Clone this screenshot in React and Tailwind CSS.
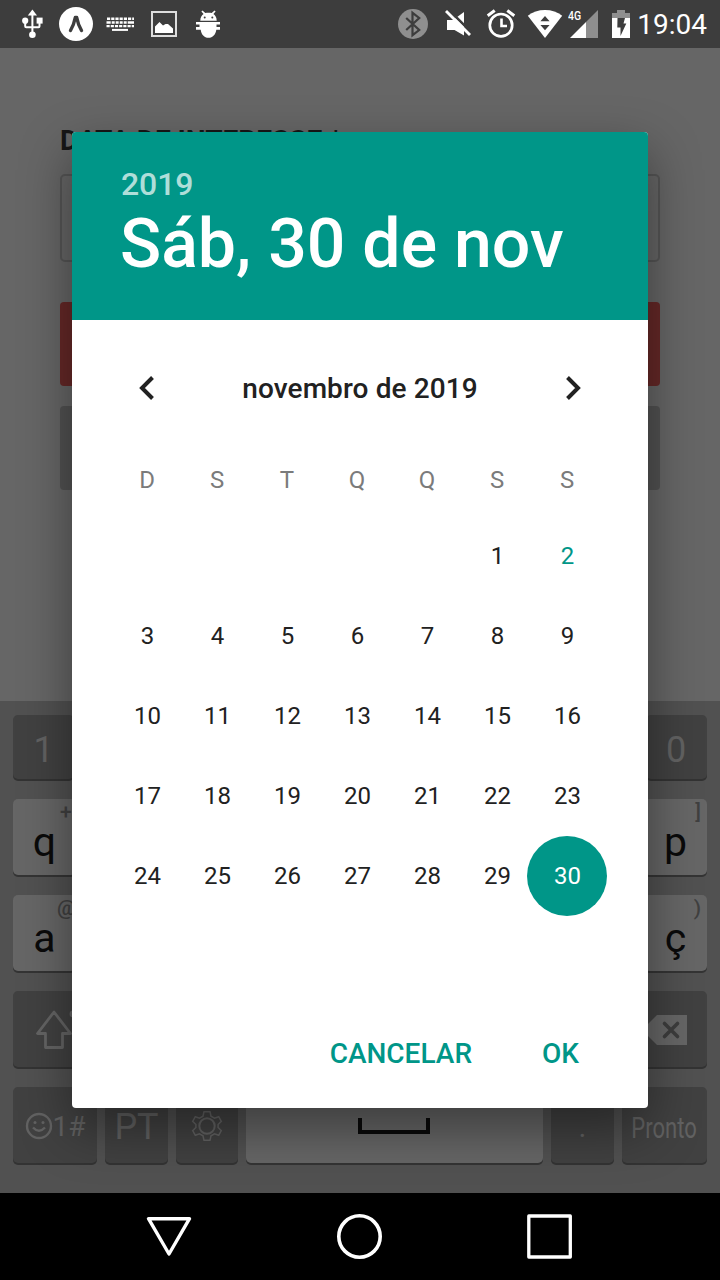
import React from "react";

const DARK = "#3d3d3d";

function StatusBar() {
  return (
    <header className="flex h-12 w-[720px] shrink-0 items-center bg-[#3d3d3d] text-white">
      <svg className="ml-5 h-12 w-6 shrink-0" viewBox="20 0 24 48" fill="#fff">
        <path d="M32.4 9.5l4.6 6h-9.2z" />
        <path d="M32.4 13v20M25.2 20v6.2q0 1 1 1h12.3q1 0 1-1V20" fill="none" stroke="#fff" strokeWidth="2" />
        <circle cx="25.2" cy="20.7" r="3.1" />
        <rect x="36.6" y="17.6" width="6" height="6" />
        <circle cx="32.4" cy="34.8" r="3.3" />
      </svg>
      <svg className="ml-3.5 h-12 w-9 shrink-0" viewBox="58 0 36 48">
        <circle cx="76" cy="24" r="17" fill="#fff" />
        <path d="M70.500 30.500Q74 24.500 75.300 17.500h1.400Q78 24.500 81.500 30.500" fill="none" stroke={DARK} strokeWidth="3.400" strokeLinecap="round" strokeLinejoin="round" />
      </svg>
      <svg className="ml-[11px] h-12 w-[30px] shrink-0" viewBox="105 0 30 48" fill="none" stroke="#fff">
        <path d="M107 18.700h27" strokeWidth="2.500" strokeDasharray="3.200 1" />
        <path d="M106.500 22.500h27.500" strokeWidth="2.300" strokeDasharray="4.200 1 3 1 3 1 3 1 3 1 8" />
        <path d="M106.500 26.200h27.500" strokeWidth="2.300" strokeDasharray="3.200 1" />
        <path d="M112 29.900h16" strokeWidth="2" />
      </svg>
      <svg className="ml-[15px] h-12 w-7 shrink-0" viewBox="150 0 28 48">
        <rect x="152" y="12" width="24" height="24" fill="none" stroke="#ddd" strokeWidth="2" />
        <path d="M155 33v-6.500l4.500-4.500 3.500 3.500 2.500-1.500h2.500l5 4.500V33z" fill="#fff" />
      </svg>
      <svg className="ml-4 h-12 w-[28px] shrink-0" viewBox="194 0 28 48" fill="#fff">
        <path d="M200.300 20.800c0-3.700 1.600-5.500 3.300-6.700l-2.200-2.600 1.100-1.100 2.800 2.700c2-.6 4.400-.6 6.400 0l2.800-2.700 1.100 1.100-2.200 2.600c1.700 1.200 3.300 3 3.300 6.700z" />
        <circle cx="204.700" cy="17.500" r="1" fill={DARK} />
        <circle cx="212.300" cy="17.500" r="1" fill={DARK} />
        <path d="M196 22h24v2.600h-3.500V27h3.500v2.700h-3.700c-.6 4.800-3.600 8.100-7.800 8.100s-7.200-3.300-7.800-8.100H196V27h3.500v-2.400H196z" />
      </svg>

      <svg className="ml-auto h-12 w-8 shrink-0" viewBox="397 0 32 48">
        <circle cx="413" cy="24" r="15" fill="#8f8f8f" />
        <path d="M406.200 18l13 12-6.700 5.200V12.800l6.700 5.200-13 12" fill="none" stroke={DARK} strokeWidth="2.200" />
      </svg>
      <svg className="ml-[15px] h-12 w-7 shrink-0" viewBox="444 0 28 48" fill="#fff">
        <path d="M464 12v23.500L454.500 30H447V20h6z" />
        <path d="M447.500 8.500l25 25" stroke={DARK} strokeWidth="2.500" />
        <path d="M446 11l24 24" stroke="#fff" strokeWidth="2.800" />
      </svg>
      <svg className="ml-[14px] h-12 w-[30px] shrink-0" viewBox="486 0 30 48" fill="none" stroke="#fff">
        <circle cx="501" cy="25.200" r="11.200" strokeWidth="2.700" />
        <path d="M501.500 18.500V26H507" strokeWidth="2.600" />
        <path d="M487.700 15.800l7-5.300M507.300 10.500l7 5.300" strokeWidth="3" />
      </svg>
      <svg className="ml-[11px] h-12 w-9 shrink-0" viewBox="527 0 36 48">
        <path d="M527.800 15.800Q535 10 545 10t17.200 5.800L545 38z" fill="#fff" />
        <path d="M545 16l4.600 5.200h-9.200zM545 30.200l4.600-5.200h-9.200z" fill={DARK} />
      </svg>
      <div className="ml-[5px] flex h-12 w-[31px] shrink-0">
        <span className="mt-[8px] h-4 w-3.5 origin-left scale-x-[.84] text-[12.500px] leading-4 font-medium">4G</span>
        <svg className="-ml-3 h-12 w-7 shrink-0" viewBox="571 0 28 48">
          <path d="M587 22l12-12v28h-12z" fill="#8f8f8f" />
          <path d="M571 38l16-16v16z" fill="#fff" />
        </svg>
      </div>
      <svg className="ml-[13px] h-12 w-[18px] shrink-0" viewBox="612 0 18 48">
        <path d="M617 10h8v3h5v5h-18v-5h5z" fill="#8f8f8f" />
        <path d="M612 18h18v20h-18z" fill="#fff" />
        <path d="M617.500 18h7.500l-1.500 5.500h2.800L620.500 36v-8.500h-3.200z" fill={DARK} />
      </svg>
      <span className="mr-[13px] ml-[7px] text-[28px] leading-[50px]"><span className="block translate-y-px">19:04</span></span>
    </header>
  );
}

function FormPage() {
  return (
    <main className="h-[653px] w-[720px] shrink-0 bg-[#666] px-[60px] pt-[77px]">
      <p className="h-8 text-[28px] leading-8 font-bold whitespace-nowrap text-[#161616]">DATA DE INTERESSE *</p>
      <div className="mt-[17px] h-[88px] rounded-[5px] border-2 border-[#555]" />
      <div className="mt-10 h-[84px] rounded-[4px] bg-[#652827]" />
      <div className="mt-5 h-[84px] rounded-[4px] bg-[#525252]" />
    </main>
  );
}

function LetterKey({ label, hint, right }) {
  return (
    <div className="relative h-[76px] w-[63px] rounded-[5px] bg-[#666] text-center text-[41px] leading-[86px] text-[#0a0a0a] shadow-[0_2px_0_#343434]">
      {label}
      <span className={"absolute top-[1px] text-[21px] leading-6 font-medium text-[#404040] " + (right ? "right-1.5" : hint === "@" ? "left-[44px]" : "left-[47px]")}>{hint}</span>
    </div>
  );
}

const darkKey = "rounded-[5px] bg-[#414141] shadow-[0_2px_0_#333] text-[#626262]";

function Keyboard() {
  return (
    <section className="flex h-[492px] w-[720px] shrink-0 flex-col bg-[#515151] px-[13px] pt-[14px]">
      <div className="flex justify-between">
        <div className={"h-[64px] w-[61px] text-center text-[36px] leading-[71px] " + darkKey}>1</div>
        <div className={"h-[64px] w-[61px] pr-px text-center text-[36px] leading-[71px] " + darkKey}>0</div>
      </div>
      <div className="mt-[20px] flex justify-between">
        <LetterKey label="q" hint="+" />
        <LetterKey label="p" hint="]" right />
      </div>
      <div className="mt-[20px] flex justify-between">
        <LetterKey label="a" hint="@" />
        <LetterKey label="ç" hint=")" right />
      </div>
      <div className="mt-[20px] flex justify-between">
        <div className={"h-[76px] w-[84px] " + darkKey}>
          <svg className="h-[76px] w-[84px]" viewBox="13 991 84 76" fill="none" stroke="#646464" strokeWidth="2.800" strokeLinejoin="round">
            <path d="M54 1012l-16.500 21.500h8V1047.500h17v-14h8z" />
            <circle cx="73" cy="1014" r="2" fill="#646464" />
          </svg>
        </div>
        <div className={"h-[76px] w-[84px] " + darkKey}>
          <svg className="h-[76px] w-[84px]" viewBox="623 991 84 76">
            <path d="M657 1015h30v30h-30l-15-15z" fill="#666" />
            <path d="M664.500 1023.500l13 13M677.500 1023.500l-13 13" stroke="#3d3d3d" strokeWidth="3.600" strokeLinecap="round" />
          </svg>
        </div>
      </div>
      <div className="mt-[20px] flex gap-2">
        <div className={"flex h-[76px] w-[84px] items-center justify-center " + darkKey}>
          <svg className="mt-0.5 h-[28px] w-[28px] shrink-0" viewBox="0 0 28 28" fill="none" stroke="#626262" strokeWidth="2.400">
            <circle cx="14" cy="14" r="12" />
            <circle cx="10" cy="10.500" r="1.500" fill="#626262" stroke="none" />
            <circle cx="18" cy="10.500" r="1.500" fill="#626262" stroke="none" />
            <path d="M8 15.500q6 6.500 12 0" />
          </svg>
          <span className="mt-[3px] text-[28px] leading-[76px]">1#</span>
        </div>
        <div className={"h-[76px] w-[63px] text-center text-[36px] leading-[80px] " + darkKey}>PT</div>
        <div className={"h-[76px] w-[62px] " + darkKey}>
          <svg className="h-[76px] w-[62px]" viewBox="176 1087 62 76" fill="none" stroke="#626262" strokeWidth="1.500">
            <circle cx="207" cy="1126" r="7.700" strokeWidth="2" />
            <path d="M204 1111.700h6l1 4.500 3.500 2 4.200-1.500 2.600 4.600-3.200 3.300v2.800l3.200 3.300-2.600 4.600-4.200-1.500-3.500 2-1 4.500h-6l-1-4.500-3.500-2-4.200 1.500-2.600-4.600 3.200-3.300v-2.800l-3.200-3.300 2.600-4.600 4.200 1.500 3.500-2z" />
          </svg>
        </div>
        <div className="h-[76px] w-[297px] rounded-[5px] bg-[#666] shadow-[0_2px_0_#343434]">
          <svg className="h-[76px] w-[297px]" viewBox="246 1087 297 76" fill="none">
            <path d="M360 1118v14h68v-14" stroke="#0a0a0a" strokeWidth="4" />
          </svg>
        </div>
        <div className={"h-[76px] w-[63px] text-center text-[30px] leading-[80px] " + darkKey}>.</div>
        <div className={"flex h-[76px] w-[85px] justify-center text-[29px] leading-[83px] " + darkKey}>
          <span className="scale-x-[.76]">Pronto</span>
        </div>
      </div>
    </section>
  );
}

function NavBar() {
  return (
    <nav className="flex h-[87px] w-[720px] shrink-0 items-start justify-between bg-black pt-[19px] pr-[146px] pl-[145px]">
      <svg className="h-12 w-12" viewBox="145 1212 48 48" fill="none" stroke="#fff" strokeWidth="3.400" strokeLinejoin="round">
        <path d="M148.500 1218.700h41L169 1254z" />
      </svg>
      <svg className="h-12 w-12" viewBox="335.500 1212 48 48" fill="none" stroke="#fff" strokeWidth="3.600">
        <circle cx="359" cy="1236.500" r="20.700" />
      </svg>
      <svg className="h-12 w-12" viewBox="526 1212 48 48" fill="none" stroke="#fff" strokeWidth="3.300" strokeLinejoin="round">
        <rect x="528.800" y="1216" width="41.500" height="41" />
      </svg>
    </nav>
  );
}

const weekdays = ["D", "S", "T", "Q", "Q", "S", "S"];
const days = [null, null, null, null, null, ...Array.from({ length: 30 }, (_, i) => i + 1)];

function dayClass(day) {
  if (day === 30) return "-mx-[5px] flex h-20 w-20 items-center justify-center rounded-full bg-[#009688] pl-px text-white";
  if (day === 2) return "flex h-20 items-center justify-center pl-px text-[#009688]";
  return "flex h-20 items-center justify-center pl-px text-[#212121]";
}

function DatePicker() {
  return (
    <div role="dialog" className="absolute top-[132px] left-[72px] flex h-[976px] w-[576px] flex-col overflow-hidden rounded-[4px] bg-white shadow-[0_20px_52px_rgba(0,0,0,.42)]">
      <div className="h-[188px] bg-[#009688] pt-8 pl-12 font-medium whitespace-nowrap text-white">
        <p className="h-10 pl-px text-[32px] leading-10 tracking-[-.1px] text-white/70">2019</p>
        <p className="h-20 text-[68px] leading-[80px]">Sáb, 30 de nov</p>
      </div>
      <div className="mt-10 flex h-14 items-center justify-between px-[51px]">
        <svg className="h-12 w-12" viewBox="123 364 48 48" fill="none" stroke="#212121" strokeWidth="4">
          <path d="M152.500 377.500L142 388l10.500 10.500" />
        </svg>
        <h2 className="pt-0.5 text-[28px] leading-9 font-medium tracking-[.1px] text-[#212121]">novembro de 2019</h2>
        <svg className="h-12 w-12" viewBox="549 364 48 48" fill="none" stroke="#212121" strokeWidth="4">
          <path d="M567.500 377.500L578 388l-10.500 10.500" />
        </svg>
      </div>
      <div className="mt-11 ml-10 grid w-[490px] grid-cols-7 text-center text-[24px] leading-10 text-[#7b7b7b]">
        {weekdays.map((d, i) => (
          <span key={i}>{d}</span>
        ))}
      </div>
      <div className="mt-4 ml-10 grid w-[490px] grid-cols-7 text-[24px] leading-8">
        {days.map((d, i) => (
          <span key={i} className={dayClass(d)}>{d}</span>
        ))}
      </div>
      <div className="mt-[109px] flex justify-end pr-[69px] text-[28px] leading-[58px] font-medium text-[#009688]">
        <button className="mr-[70px]">CANCELAR</button>
        <button>OK</button>
      </div>
    </div>
  );
}

export default function App() {
  return (
    <div className="relative flex h-[1280px] w-[720px] flex-col overflow-hidden bg-[#666] font-[Roboto,sans-serif]">
      <StatusBar />
      <FormPage />
      <Keyboard />
      <NavBar />
      <DatePicker />
    </div>
  );
}
